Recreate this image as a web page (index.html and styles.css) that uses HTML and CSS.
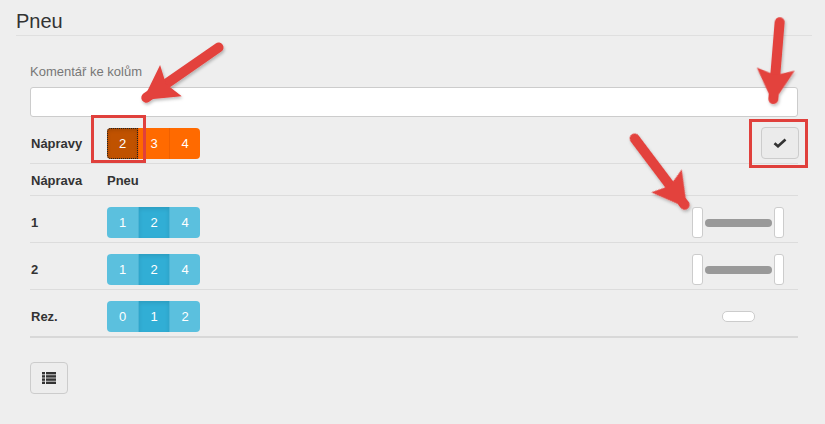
FILE: index.html
```html
<!DOCTYPE html>
<html lang="cs">
<head>
  <meta charset="UTF-8" />
  <meta name="viewport" content="width=device-width, initial-scale=1.0"/>
  <title>Pneu</title>
  <link rel="stylesheet" href="styles.css">
</head>
<body>
  <div class="page">
    <h3 class="title">Pneu</h3>
    <div class="content">
      <label class="field-label" for="comment">Komentář ke kolům</label>
      <input type="text" id="comment" class="field-input">

      <div class="axle-row">
        <span class="row-label">Nápravy</span>
        <div class="btn-group orange">
          <button class="btn active focused">2</button>
          <button class="btn">3</button>
          <button class="btn">4</button>
        </div>
        <button class="btn-check" aria-label="OK">
          <svg viewBox="0 0 14 10" width="14" height="10">
            <path d="M1.5 5.2 L5 8.3 L12.5 1.5" fill="none" stroke="#333" stroke-width="2.6" stroke-linejoin="miter"/>
          </svg>
        </button>
      </div>

      <div class="table">
        <div class="t-row t-head">
          <span class="col-first">Náprava</span>
          <span>Pneu</span>
        </div>
        <div class="t-row">
          <span class="col-first">1</span>
          <div class="btn-group blue">
            <button class="btn">1</button>
            <button class="btn active">2</button>
            <button class="btn">4</button>
          </div>
          <div class="axle">
            <span class="wheel"></span>
            <span class="shaft"></span>
            <span class="wheel"></span>
          </div>
        </div>
        <div class="t-row">
          <span class="col-first">2</span>
          <div class="btn-group blue">
            <button class="btn">1</button>
            <button class="btn active">2</button>
            <button class="btn">4</button>
          </div>
          <div class="axle">
            <span class="wheel"></span>
            <span class="shaft"></span>
            <span class="wheel"></span>
          </div>
        </div>
        <div class="t-row t-last">
          <span class="col-first">Rez.</span>
          <div class="btn-group blue">
            <button class="btn">0</button>
            <button class="btn active">1</button>
            <button class="btn">2</button>
          </div>
          <div class="axle spare-wrap">
            <span class="spare"></span>
          </div>
        </div>
      </div>

      <button class="btn-list" aria-label="Seznam">
        <svg viewBox="0 0 14 12" width="14" height="12">
          <rect x="0" y="0" width="3" height="2.4" fill="#333"/>
          <rect x="4" y="0" width="10" height="2.4" fill="#333"/>
          <rect x="0" y="3.2" width="3" height="2.4" fill="#333"/>
          <rect x="4" y="3.2" width="10" height="2.4" fill="#333"/>
          <rect x="0" y="6.4" width="3" height="2.4" fill="#333"/>
          <rect x="4" y="6.4" width="10" height="2.4" fill="#333"/>
          <rect x="0" y="9.6" width="3" height="2.4" fill="#333"/>
          <rect x="4" y="9.6" width="10" height="2.4" fill="#333"/>
        </svg>
      </button>
    </div>
  </div>

  <!-- annotation layer -->
  <svg class="marks" viewBox="0 0 825 424" width="825" height="424">
    <defs>
      <filter id="shadow" x="-20%" y="-20%" width="140%" height="140%">
        <feDropShadow dx="1" dy="2" stdDeviation="1.5" flood-color="#000" flood-opacity="0.25"/>
      </filter>
    </defs>
    <rect x="92.5" y="116.5" width="52" height="45" fill="none" stroke="#e0403c" stroke-width="3"/>
    <rect x="750.5" y="120.5" width="56" height="46" fill="none" stroke="#e0403c" stroke-width="3"/>
    <g filter="url(#shadow)">
      <g transform="translate(143 100) rotate(145.2)">
        <line x1="-4" y1="0" x2="-92" y2="0" stroke="#e3423e" stroke-width="10" stroke-linecap="round"/>
        <polygon points="0,0 -34,-19 -28,0 -34,19" fill="#e3423e"/>
      </g>
      <g transform="translate(773 103) rotate(94.7)">
        <line x1="-4" y1="0" x2="-81" y2="0" stroke="#e3423e" stroke-width="10" stroke-linecap="round"/>
        <polygon points="0,0 -34,-19 -28,0 -34,19" fill="#e3423e"/>
      </g>
      <g transform="translate(687 208) rotate(53)">
        <line x1="-4" y1="0" x2="-87" y2="0" stroke="#e3423e" stroke-width="10" stroke-linecap="round"/>
        <polygon points="0,0 -34,-19 -28,0 -34,19" fill="#e3423e"/>
      </g>
    </g>
  </svg>
</body>
</html>
```

FILE: styles.css
```css
html, body {
  margin: 0;
  padding: 0;
  width: 825px;
  height: 424px;
  overflow: hidden;
  background: #eeeeee;
  font-family: "Liberation Sans", Arial, sans-serif;
  font-size: 13px;
  color: #333;
}
.page {
  padding: 0 13px 0 16px;
}
.title {
  margin: 10px 0 0 0;
  font-size: 20px;
  font-weight: normal;
  line-height: 22px;
  padding-bottom: 3px;
  border-bottom: 1px solid #dfdfdf;
}
.content {
  padding: 0 14px;
}
.field-label {
  display: block;
  margin-top: 27px;
  line-height: 18px;
  color: #777;
}
.field-input {
  display: block;
  box-sizing: border-box;
  width: 100%;
  height: 30px;
  margin-top: 6px;
  border: 1px solid #ccc;
  border-radius: 3px;
  background: #fff;
  outline: none;
}
.axle-row {
  display: flex;
  align-items: center;
  margin-top: 10px;
  padding-bottom: 4px;
  border-bottom: 1px solid #dcdcdc;
}
.row-label {
  font-weight: bold;
  width: 77px;
  padding-left: 1px;
  box-sizing: border-box;
}
.btn-group {
  display: flex;
}
.btn {
  width: 31px;
  height: 31px;
  padding: 0;
  border: none;
  font-family: "Liberation Sans", Arial, sans-serif;
  font-size: 13px;
  color: #fff;
  cursor: pointer;
}
.btn:first-child {
  border-radius: 4px 0 0 4px;
}
.btn:last-child {
  border-radius: 0 4px 4px 0;
}
.orange .btn {
  background: #ff6a00;
  border-left: 1px solid #f06000;
}
.orange .btn:first-child {
  border-left: none;
}
.orange .btn.active {
  background: #c05200;
  box-shadow: inset 0 2px 4px rgba(0, 0, 0, 0.15);
}
.focused {
  outline: 1px dotted #222;
  outline-offset: -1px;
}
.blue .btn {
  background: #5bc0de;
  border-left: 1px solid #4bb4d6;
}
.blue .btn:first-child {
  border-left: none;
}
.blue .btn.active {
  background: #31aed5;
  box-shadow: inset 0 2px 4px rgba(0, 0, 0, 0.1);
}
.btn-check {
  margin-left: auto;
  margin-right: -1px;
  width: 38px;
  height: 32px;
  border: 1px solid #ccc;
  border-radius: 4px;
  background: #ebebeb;
  display: flex;
  justify-content: center;
  align-items: center;
  padding: 0;
}
.t-row {
  display: flex;
  align-items: center;
  padding: 11px 14px 4px 0;
  border-bottom: 1px solid #dcdcdc;
}
.t-head {
  padding: 1px 0 0 0;
  box-sizing: border-box;
  height: 32px;
  font-weight: bold;
}
.t-row .col-first {
  width: 77px;
  padding-left: 1px;
  box-sizing: border-box;
  font-weight: bold;
}
.t-last {
  border-bottom: 2px solid #d8d8d8;
}
.axle {
  margin-left: auto;
  width: 92px;
  height: 31px;
  display: flex;
  align-items: center;
  justify-content: space-between;
}
.wheel {
  box-sizing: border-box;
  width: 11px;
  height: 31px;
  background: #fff;
  border: 1px solid #ccc;
  border-radius: 3px;
}
.wheel:last-child {
  width: 10px;
}
.shaft {
  width: 67px;
  height: 8px;
  border-radius: 4px;
  background: #999;
}
.spare-wrap {
  justify-content: center;
}
.spare {
  box-sizing: border-box;
  width: 33px;
  height: 11px;
  background: #fff;
  border: 1px solid #ccc;
  border-radius: 5px;
}
.btn-list {
  display: flex;
  justify-content: center;
  align-items: center;
  margin-top: 24px;
  width: 38px;
  height: 32px;
  padding: 0;
  border: 1px solid #ccc;
  border-radius: 4px;
  background: #ededed;
}
.marks {
  position: absolute;
  top: 0;
  left: 0;
  pointer-events: none;
}
```
